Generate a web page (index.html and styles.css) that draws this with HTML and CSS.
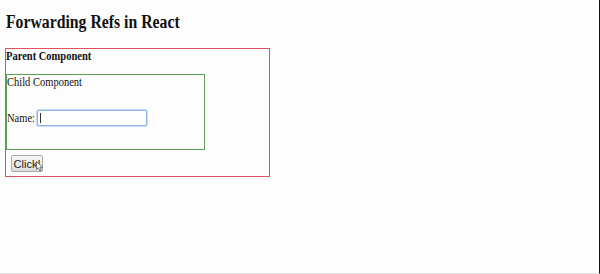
FILE: index.html
```html
<!DOCTYPE html>
<html lang="en">
<head>
  <meta charset="UTF-8" />
  <title>Forwarding Refs in React</title>
  <link rel="stylesheet" href="styles.css">
</head>
<body>
  <div id="root">
    <h2 class="title"><span class="narrow">Forwarding Refs in React</span></h2>
    <!-- Parent component -->
    <div class="parent">
      <strong class="narrow">Parent Component</strong>
      <!-- Child component receives the forwarded ref -->
      <div class="child">
        <div><span class="narrow">Child Component</span></div>
        <p class="name-row">
          <span class="label"><span class="narrow">Name:</span></span>
          <span class="input-wrap">
            <input type="text" class="name-input" />
            <span class="caret"></span>
          </span>
        </p>
      </div>
      <div class="actions">
        <span class="btn-wrap">
          <button class="click-btn">Click!</button>
          <svg class="cursor" width="8" height="11" viewBox="0 0 8 11">
            <path d="M0.5 0.5 L0.5 8.5 L2.5 6.8 L4 10 L5.3 9.4 L3.9 6.3 L6.6 6.3 Z" fill="#fff" stroke="#555" stroke-width="0.8"/>
          </svg>
        </span>
      </div>
    </div>
  </div>
</body>
</html>
```

FILE: styles.css
```css
/* Page frame */
html, body {
  margin: 0;
  padding: 0;
}
body {
  background: #fdfdfd;
  font-family: "Liberation Serif", "Times New Roman", serif;
  font-size: 12px;
  color: #111;
}
#root {
  box-sizing: border-box;
  width: 600px;
  height: 274px;
  padding: 0 5px;
  border-right: 1px solid #111;
  border-bottom: 1px solid #e2e2e2;
  overflow: hidden;
}
/* the capture is squeezed sideways, so text is narrowed to match */
.narrow {
  display: inline-block;
  transform: scaleX(0.875);
  transform-origin: 0 50%;
  white-space: nowrap;
}
.title {
  font-size: 18px;
  margin: 12px 0 15px 1px;
  line-height: 21px;
}
/* Parent box */
.parent {
  width: 263px;
  border: 1px solid #dc5462;
}
.parent strong {
  display: block;
  line-height: 14px;
}
/* Child box */
.child {
  width: 197px;
  margin-top: 11px;
  border: 1px solid #5aa352;
  line-height: 14px;
}
.name-row {
  margin: 21px 0 23px 0;
  display: flex;
  align-items: center;
}
.label {
  width: 30px;
}
.input-wrap {
  position: relative;
  display: inline-block;
}
.name-input {
  box-sizing: border-box;
  width: 110px;
  height: 16px;
  margin: 0;
  padding: 0 2px;
  border: 1px solid #8fb2e6;
  border-radius: 2px;
  box-shadow: 0 0 0 1px #c9dcf6;
  background: #fff;
  outline: none;
}
.caret {
  position: absolute;
  left: 3px;
  top: 3px;
  width: 1px;
  height: 10px;
  background: #333;
}
/* Button row */
.actions {
  padding: 5px 0 4px 5px;
}
.btn-wrap {
  position: relative;
  display: inline-block;
  vertical-align: top;
}
.click-btn {
  display: block;
  box-sizing: border-box;
  width: 32px;
  height: 17px;
  padding: 0;
  font-family: "Liberation Sans", Arial, sans-serif;
  font-size: 11px;
  color: #222;
  background: linear-gradient(#f6f6f6, #dedede);
  border: 1px solid #a9a9a9;
  border-radius: 2px;
}
.cursor {
  position: absolute;
  left: 25px;
  top: 6px;
}
```
